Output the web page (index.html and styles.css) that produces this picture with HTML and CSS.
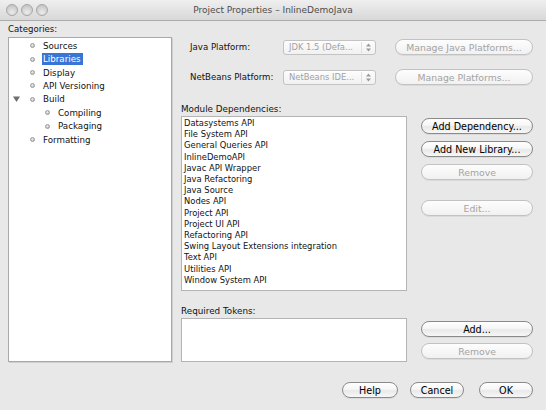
FILE: index.html
```html
<!DOCTYPE html>
<html>
<head>
<meta charset="utf-8">
<title>Project Properties</title>
<link rel="stylesheet" href="styles.css">
</head>
<body>
<div class="window">
  <div class="titlebar">
    <div class="lights"><span class="light"></span><span class="light"></span><span class="light"></span></div>
    <div class="title">Project Properties – InlineDemoJava</div>
    <div></div>
  </div>
  <div class="content">
    <div class="left">
      <div class="label cat-label">Categories:</div>
      <div class="tree">
        <div class="node"><span class="toggle"></span><span class="bullet"></span><span class="ntext">Sources</span></div>
        <div class="node"><span class="toggle"></span><span class="bullet"></span><span class="ntext sel">Libraries</span></div>
        <div class="node"><span class="toggle"></span><span class="bullet"></span><span class="ntext">Display</span></div>
        <div class="node"><span class="toggle"></span><span class="bullet"></span><span class="ntext">API Versioning</span></div>
        <div class="node"><span class="toggle"><svg width="7" height="6" viewBox="0 0 7 6"><path d="M0 0.5 H7 L3.5 6 Z" fill="#6e6e6e"/></svg></span><span class="bullet"></span><span class="ntext">Build</span></div>
        <div class="node child"><span class="toggle"></span><span class="bullet"></span><span class="ntext">Compiling</span></div>
        <div class="node child"><span class="toggle"></span><span class="bullet"></span><span class="ntext">Packaging</span></div>
        <div class="node"><span class="toggle"></span><span class="bullet"></span><span class="ntext">Formatting</span></div>
      </div>
    </div>
    <div class="right">
      <div class="prow first">
        <span class="plabel">Java Platform:</span>
        <div class="combo"><span class="ctext">JDK 1.5 (Defa...</span><span class="carrows"><svg width="5" height="9" viewBox="0 0 5 9"><path d="M0 3.5 L2.5 0.5 L5 3.5 Z M0 5.5 L2.5 8.5 L5 5.5 Z" fill="#9a9a9a"/></svg></span></div>
        <button class="btn off pbtn">Manage Java Platforms...</button>
      </div>
      <div class="prow second">
        <span class="plabel">NetBeans Platform:</span>
        <div class="combo"><span class="ctext">NetBeans IDE...</span><span class="carrows"><svg width="5" height="9" viewBox="0 0 5 9"><path d="M0 3.5 L2.5 0.5 L5 3.5 Z M0 5.5 L2.5 8.5 L5 5.5 Z" fill="#9a9a9a"/></svg></span></div>
        <button class="btn off pbtn">Manage Platforms...</button>
      </div>
      <div class="label mod-label">Module Dependencies:</div>
      <div class="mrow">
        <div class="list">
          <div class="item">Datasystems API</div>
          <div class="item">File System API</div>
          <div class="item">General Queries API</div>
          <div class="item">InlineDemoAPI</div>
          <div class="item">Javac API Wrapper</div>
          <div class="item">Java Refactoring</div>
          <div class="item">Java Source</div>
          <div class="item">Nodes API</div>
          <div class="item">Project API</div>
          <div class="item">Project UI API</div>
          <div class="item">Refactoring API</div>
          <div class="item">Swing Layout Extensions integration</div>
          <div class="item">Text API</div>
          <div class="item">Utilities API</div>
          <div class="item">Window System API</div>
        </div>
        <div class="bcol">
          <button class="btn">Add Dependency...</button>
          <button class="btn">Add New Library...</button>
          <button class="btn off">Remove</button>
          <button class="btn off gap-big">Edit...</button>
        </div>
      </div>
      <div class="label tok-label">Required Tokens:</div>
      <div class="trow">
        <div class="tokens"></div>
        <div class="bcol tcol">
          <button class="btn">Add...</button>
          <button class="btn off">Remove</button>
        </div>
      </div>
    </div>
  </div>
  <div class="footer">
    <button class="btn fbtn help">Help</button>
    <button class="btn fbtn cancel">Cancel</button>
    <button class="btn fbtn ok">OK</button>
  </div>
</div>
</body>
</html>
```

FILE: styles.css
```css
* { box-sizing: border-box; margin: 0; padding: 0; }
html, body { width: 546px; height: 410px; overflow: hidden; }
body {
  background: #e8e8e8;
  font-family: "DejaVu Sans", "Noto Sans", sans-serif;
  color: #111;
}
.window { width: 546px; height: 410px; display: flex; flex-direction: column; }

.titlebar {
  height: 21px;
  flex: none;
  display: grid;
  grid-template-columns: 1fr auto 1fr;
  align-items: center;
  background: linear-gradient(#efefef, #d8d8d8);
  border-bottom: 1px solid #ababab;
}
.lights { display: flex; gap: 3px; padding-left: 6px; }
.light {
  width: 12px; height: 12px; border-radius: 50%;
  background: radial-gradient(circle at 50% 75%, #ececec 0%, #d2d2d2 55%, #bcbcbc 100%);
  border: 1px solid #a6a6a6;
}
.title { font-size: 9px; color: #4d4d4d; }

.content { display: flex; padding: 0 13px 0 8px; flex: none; }
.left { width: 164px; flex: none; }
.label { font-size: 8.6px; color: #111; }
.cat-label { height: 16px; line-height: 16px; }

.tree {
  height: 325px;
  background: #fff;
  border: 1px solid #a8a8a8;
  box-shadow: 1px 1px 0 #cfcfcf;
  padding-top: 1px;
}
.node { display: flex; align-items: center; height: 13.43px; font-size: 8.7px; color: #111; }
.toggle { width: 21px; flex: none; display: flex; align-items: center; padding-left: 4px; }
.bullet {
  width: 5px; height: 5px; border-radius: 50%; flex: none;
  background: radial-gradient(circle at 40% 35%, #f4f4f4, #a9a9a9);
  border: 0.5px solid #9a9a9a;
}
.child .bullet { margin-left: 15px; }
.ntext { margin-left: 8px; line-height: 12px; padding: 0 2px 0 1px; position: relative; left: -1px; }
.sel { background: #3875d7; color: #fff; }

.right { width: 352px; margin-left: 9px; display: flex; flex-direction: column; }
.prow { display: flex; align-items: center; height: 16px; }
.prow.first { margin-top: 18px; }
.prow.second { margin-top: 14px; }
.plabel { width: 102px; padding-left: 9px; font-size: 8.6px; flex: none; }
.combo {
  width: 93px; height: 15px; flex: none;
  border: 1px solid #c3c3c3; border-radius: 3px;
  background: linear-gradient(#fdfdfd, #f1f1f1);
  display: flex; align-items: center;
  font-size: 8.4px; color: #a2a2a2;
}
.ctext { flex: 1; padding-left: 5px; white-space: nowrap; overflow: hidden; }
.carrows {
  width: 14px; height: 11px; flex: none;
  border-left: 1px solid #dedede;
  display: flex; align-items: center; justify-content: center;
}
.btn {
  height: 16px;
  border: 1px solid #8a8a8a;
  border-radius: 8px;
  background: linear-gradient(#ffffff 0%, #f6f6f6 45%, #e9e9e9 55%, #f7f7f7 100%);
  font-family: "DejaVu Sans", "Noto Sans", sans-serif;
  font-size: 9.6px;
  color: #000;
  display: flex; align-items: center; justify-content: center;
  white-space: nowrap;
  box-shadow: 0 1px 0 rgba(0,0,0,0.06);
}
.btn.off { border-color: #c2c2c2; color: #a3a3a3; background: linear-gradient(#fdfdfd, #f1f1f1); font-size: 9.3px; }
.pbtn { width: 138px; margin-left: 19px; }

.mod-label { margin-top: 17px; height: 14px; line-height: 14px; font-size: 8.8px; }
.mrow { display: flex; height: 175px; }
.list {
  width: 226px; flex: none;
  background: #fff;
  border: 1px solid #b4b4b4;
  padding: 1px 0 0 2px;
  font-size: 8.4px;
}
.item { height: 11.21px; line-height: 11.21px; white-space: nowrap; }
.bcol { width: 112px; margin-left: 14px; display: flex; flex-direction: column; gap: 7px; padding-top: 2px; }
.gap-big { margin-top: 13px; }

.tok-label { margin-top: 14px; height: 13px; line-height: 13px; font-size: 8.8px; }
.trow { display: flex; height: 44px; }
.tokens { width: 226px; flex: none; background: #fff; border: 1px solid #b4b4b4; }
.tcol { gap: 6px; padding-top: 3px; }

.footer { display: flex; justify-content: flex-end; padding: 20px 13px 0 0; }
.fbtn { width: 56px; }
.cancel { width: 54px; margin-left: 12px; }
.ok { width: 54px; margin-left: 15px; }
```
